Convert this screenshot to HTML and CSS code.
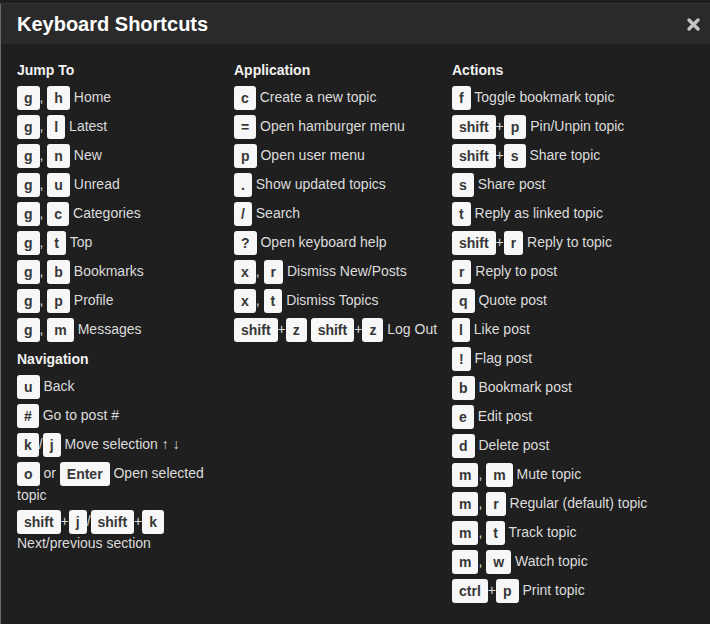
FILE: index.html
```html
<!DOCTYPE html>
<html>
<head>
<meta charset="utf-8">
<link rel="stylesheet" href="styles.css">
</head>
<body>
<div class="modal">
  <div class="modal-header">
    <h3 class="title">Keyboard Shortcuts</h3>
    <button class="close" aria-label="close">
      <svg width="15" height="15" viewBox="0 0 15 15"><path d="M3 3 L12 12 M12 3 L3 12" stroke="#c4c4c4" stroke-width="3.4" stroke-linecap="round"/></svg>
    </button>
  </div>
  <div class="modal-body">
    <div class="col">
      <h4 class="sec">Jump To</h4>
      <ul class="list">
        <li><kbd>g</kbd>, <kbd>h</kbd> Home</li>
        <li><kbd>g</kbd>, <kbd>l</kbd> Latest</li>
        <li><kbd>g</kbd>, <kbd>n</kbd> New</li>
        <li><kbd>g</kbd>, <kbd>u</kbd> Unread</li>
        <li><kbd>g</kbd>, <kbd>c</kbd> Categories</li>
        <li><kbd>g</kbd>, <kbd>t</kbd> Top</li>
        <li><kbd>g</kbd>, <kbd>b</kbd> Bookmarks</li>
        <li><kbd>g</kbd>, <kbd>p</kbd> Profile</li>
        <li><kbd>g</kbd>, <kbd>m</kbd> Messages</li>
      </ul>
      <h4 class="sec sec-next">Navigation</h4>
      <ul class="list">
        <li><kbd>u</kbd> Back</li>
        <li><kbd>#</kbd> Go to post #</li>
        <li><kbd>k</kbd>/<kbd>j</kbd> Move selection &uarr; &darr;</li>
        <li><kbd>o</kbd> or <kbd>Enter</kbd> Open selected topic</li>
        <li><kbd>shift</kbd>+<kbd>j</kbd>/<kbd>shift</kbd>+<kbd>k</kbd> Next/previous section</li>
      </ul>
    </div>
    <div class="col">
      <h4 class="sec">Application</h4>
      <ul class="list">
        <li><kbd>c</kbd> Create a new topic</li>
        <li><kbd>=</kbd> Open hamburger menu</li>
        <li><kbd>p</kbd> Open user menu</li>
        <li><kbd>.</kbd> Show updated topics</li>
        <li><kbd>/</kbd> Search</li>
        <li><kbd>?</kbd> Open keyboard help</li>
        <li><kbd>x</kbd>, <kbd>r</kbd> Dismiss New/Posts</li>
        <li><kbd>x</kbd>, <kbd>t</kbd> Dismiss Topics</li>
        <li><kbd>shift</kbd>+<kbd>z</kbd> <kbd>shift</kbd>+<kbd>z</kbd> Log Out</li>
      </ul>
    </div>
    <div class="col">
      <h4 class="sec">Actions</h4>
      <ul class="list">
        <li><kbd>f</kbd> Toggle bookmark topic</li>
        <li><kbd>shift</kbd>+<kbd>p</kbd> Pin/Unpin topic</li>
        <li><kbd>shift</kbd>+<kbd>s</kbd> Share topic</li>
        <li><kbd>s</kbd> Share post</li>
        <li><kbd>t</kbd> Reply as linked topic</li>
        <li><kbd>shift</kbd>+<kbd>r</kbd> Reply to topic</li>
        <li><kbd>r</kbd> Reply to post</li>
        <li><kbd>q</kbd> Quote post</li>
        <li><kbd>l</kbd> Like post</li>
        <li><kbd>!</kbd> Flag post</li>
        <li><kbd>b</kbd> Bookmark post</li>
        <li><kbd>e</kbd> Edit post</li>
        <li><kbd>d</kbd> Delete post</li>
        <li><kbd>m</kbd>, <kbd>m</kbd> Mute topic</li>
        <li><kbd>m</kbd>, <kbd>r</kbd> Regular (default) topic</li>
        <li><kbd>m</kbd>, <kbd>t</kbd> Track topic</li>
        <li><kbd>m</kbd>, <kbd>w</kbd> Watch topic</li>
        <li><kbd>ctrl</kbd>+<kbd>p</kbd> Print topic</li>
      </ul>
    </div>
  </div>
</div>
</body>
</html>
```

FILE: styles.css
```css
html, body {
  margin: 0;
  padding: 0;
  background: #1f1f1f;
}
body {
  font-family: "Liberation Sans", Arial, sans-serif;
  color: #dcdcdc;
  font-size: 14px;
}
.modal {
  margin-top: 3px;
  border-left: 1px solid #6a6a6a;
  border-top: 1px solid #333;
  min-height: 620px;
  background: #1f1f1f;
}
.modal-header {
  height: 40px;
  background: #2a2a2a;
  display: flex;
  align-items: center;
  justify-content: space-between;
  padding: 0 9px 0 16px;
}
.title {
  margin: 0;
  font-size: 20px;
  font-weight: bold;
  color: #ffffff;
  line-height: 24px;
}
.close {
  background: none;
  border: 0;
  padding: 0;
  margin: 0;
  width: 15px;
  height: 15px;
  display: flex;
}
.modal-body {
  display: grid;
  grid-template-columns: 217px 218px 1fr;
  padding: 14px 0 0 16px;
}
.sec {
  margin: 0 0 3px;
  font-size: 14px;
  font-weight: bold;
  color: #f2f2f2;
  height: 25px;
  line-height: 25px;
}
.sec-next {
  margin-top: 1px;
  margin-bottom: 3px;
}
.list {
  list-style: none;
  margin: 0;
  padding: 0;
}
.list li {
  line-height: 19px;
  margin-bottom: 5px;
}
kbd {
  display: inline-block;
  height: 24px;
  line-height: 24px;
  padding: 0 7px;
  background: #f7f7f7;
  color: #363636;
  border-radius: 3px;
  font-family: "Liberation Sans", Arial, sans-serif;
  font-size: 14px;
  font-weight: bold;
  vertical-align: middle;
}
```
